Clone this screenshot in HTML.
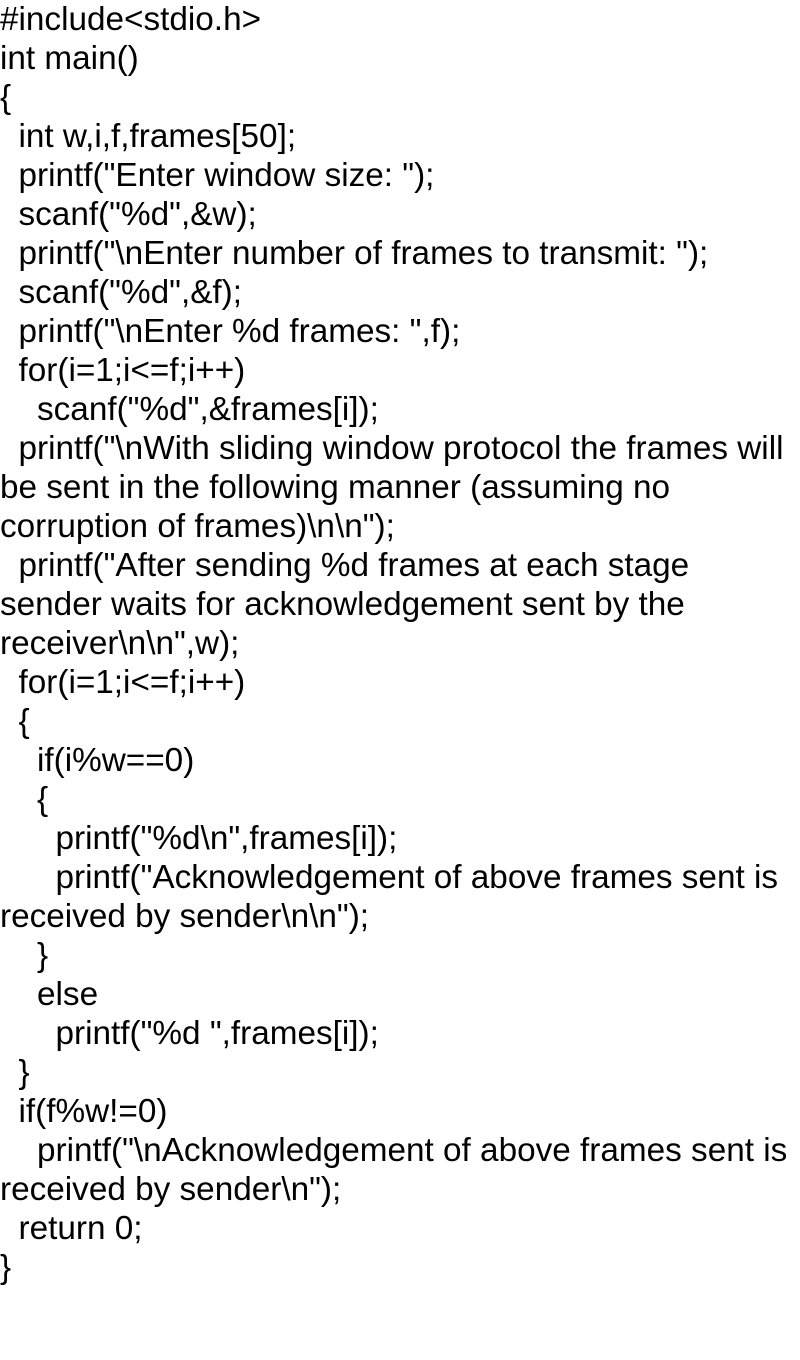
<!DOCTYPE html>
<html><head><meta charset="utf-8"><style>
html,body{margin:0;padding:0;background:#fff;}
body{width:800px;height:1360px;overflow:hidden;}
pre{margin:0;font-family:"Liberation Sans",Arial,sans-serif;font-size:33.3px;line-height:39px;color:#000;white-space:pre;}
</style></head><body><pre>#include&lt;stdio.h&gt;
int main()
{
  int w,i,f,frames[50];
  printf("Enter window size: ");
  scanf("%d",&amp;w);
  printf("\nEnter number of frames to transmit: ");
  scanf("%d",&amp;f);
  printf("\nEnter %d frames: ",f);
  for(i=1;i&lt;=f;i++)
    scanf("%d",&amp;frames[i]);
  printf("\nWith sliding window protocol the frames will
be sent in the following manner (assuming no
corruption of frames)\n\n");
  printf("After sending %d frames at each stage
sender waits for acknowledgement sent by the
receiver\n\n",w);
  for(i=1;i&lt;=f;i++)
  {
    if(i%w==0)
    {
      printf("%d\n",frames[i]);
      printf("Acknowledgement of above frames sent is
received by sender\n\n");
    }
    else
      printf("%d ",frames[i]);
  }
  if(f%w!=0)
    printf("\nAcknowledgement of above frames sent is
received by sender\n");
  return 0;
}
</pre></body></html>
